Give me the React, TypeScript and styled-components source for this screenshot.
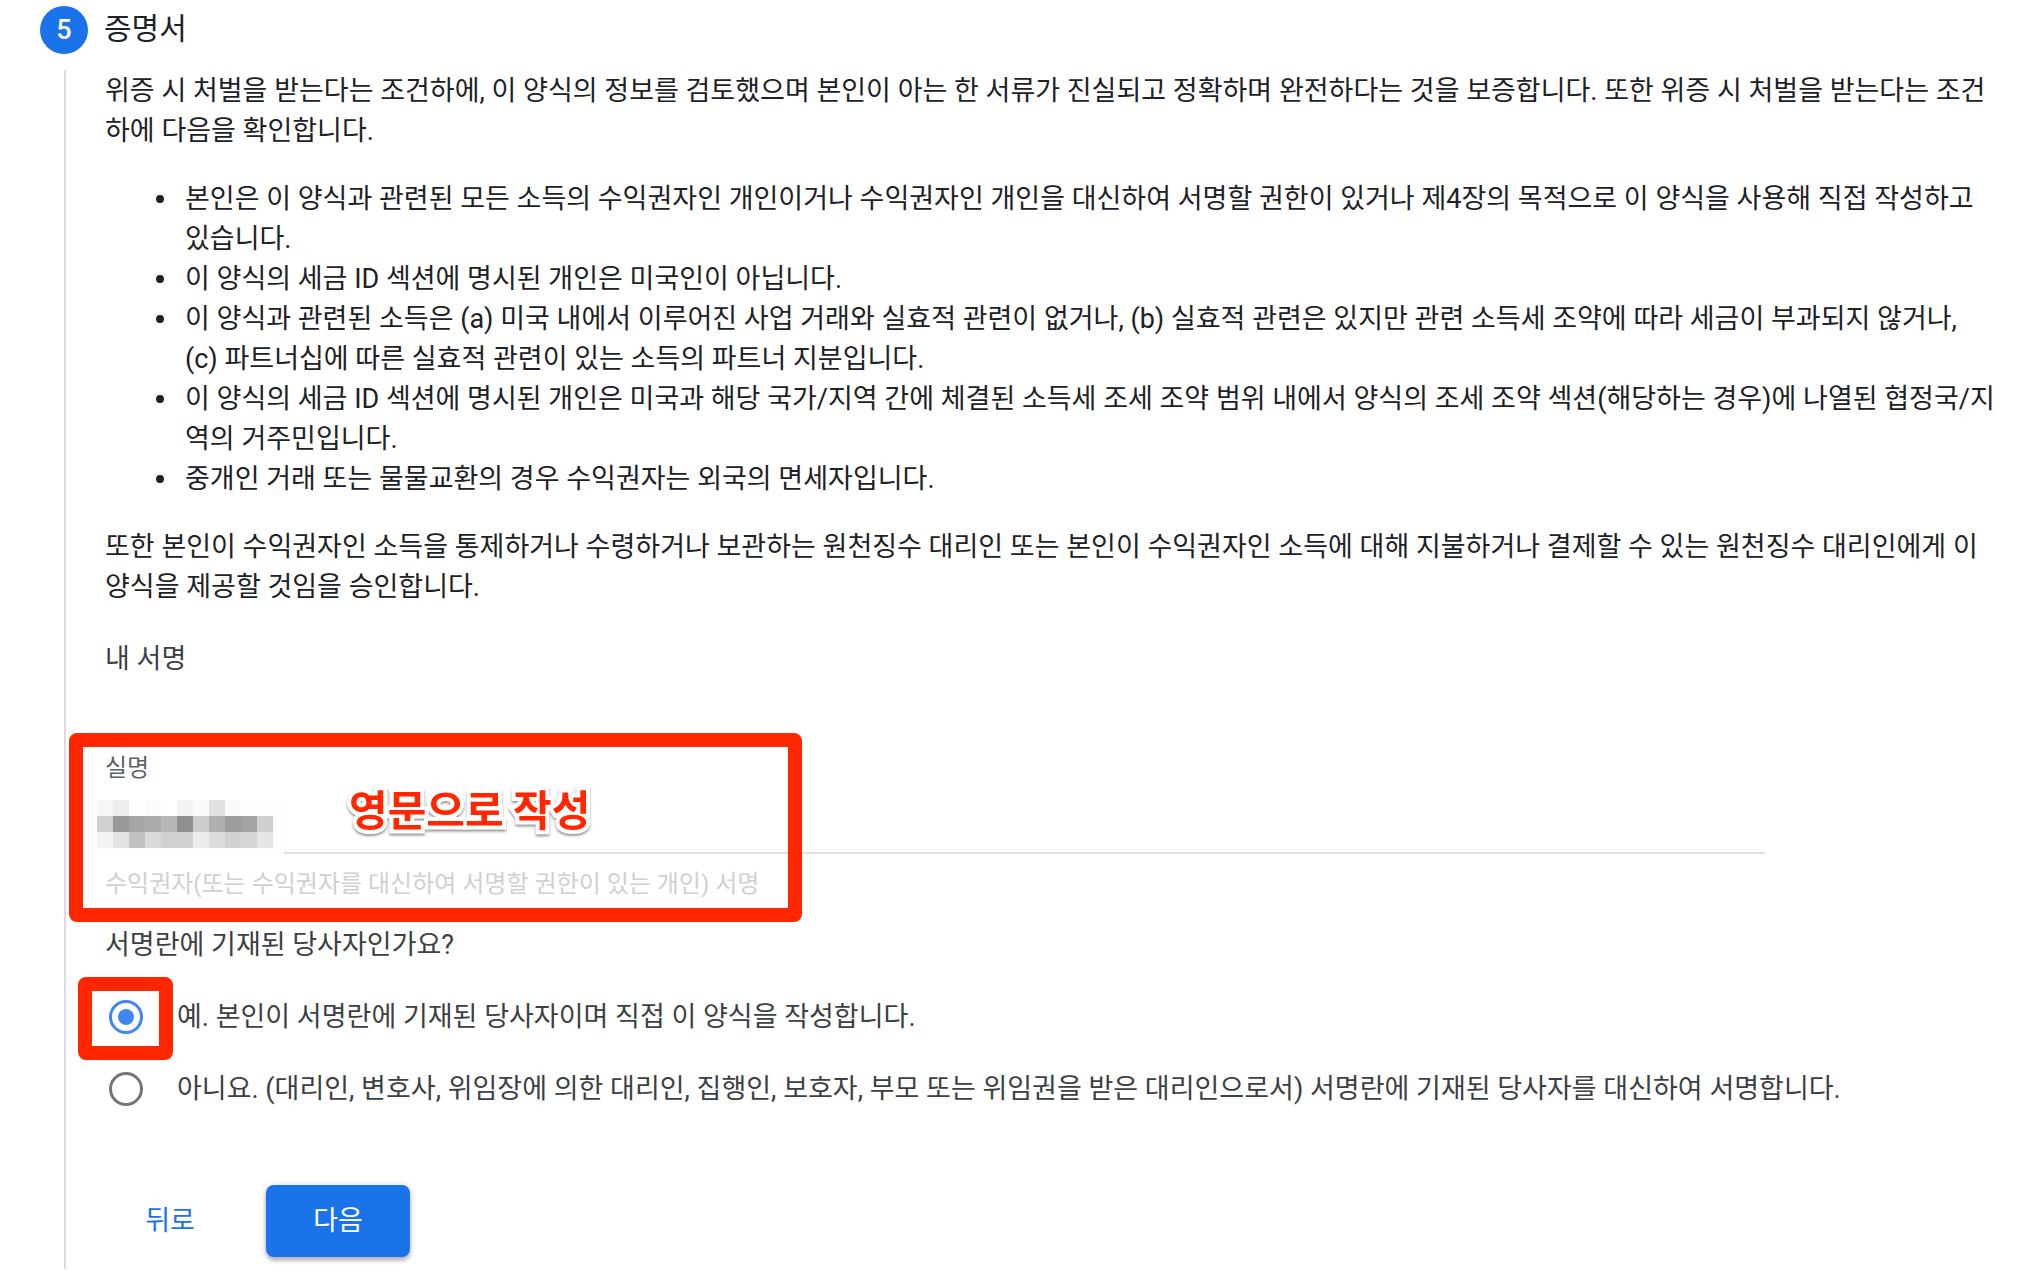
import React, { useState } from "react";
import styled, { createGlobalStyle } from "styled-components";

const GlobalStyle = createGlobalStyle`
  * { box-sizing: border-box; }
  body {
    margin: 0;
    background: #fff;
    color: #202124;
    font-family: Roboto, "Noto Sans CJK KR", sans-serif;
    font-size: 27px;
    line-height: 40px;
  }
`;

const RED = "#ff2600";

const Step = styled.section`
  padding: 6px 42px 12px 40px;
`;

const StepHeader = styled.header`
  display: flex;
  align-items: center;
  gap: 16px;
  height: 48px;
`;

const StepNumber = styled.span`
  display: flex;
  align-items: center;
  justify-content: center;
  width: 48px;
  height: 48px;
  border-radius: 50%;
  background: #1a73e8;
  color: #fff;
  font-weight: 500;
`;

const StepTitle = styled.h2`
  margin: 0;
  padding-bottom: 2px;
  font-size: 30px;
  font-weight: 400;
`;

const StepBody = styled.form`
  margin: 16px 0 0 24px;
  padding: 1px 0 0 39px;
  border-left: 2px solid #dadce0;
`;

const Paragraph = styled.p`
  margin: 0;
`;

const Terms = styled.ul`
  margin: 28px 0;
  padding-left: 80px;
  list-style: none;
`;

const Term = styled.li`
  &::before {
    content: "";
    display: inline-block;
    width: 8px;
    height: 8px;
    margin: 0 21px 0 -29px;
    border-radius: 50%;
    background: currentColor;
    vertical-align: 5px;
  }
`;

const GroupTitle = styled.h3`
  margin: 32px 0 0;
  color: #3c4043;
  font-size: 27px;
  font-weight: 400;
`;

const Field = styled.div`
  position: relative;
  display: flex;
  flex-direction: column;
  width: 87.5%;
  margin-top: 69px;
`;

const FieldLabel = styled.label`
  color: #5f6368;
  font-size: 24px;
  line-height: 40px;
`;

const FieldInput = styled.input`
  height: 66px;
  padding: 0;
  border: 0;
  border-bottom: 2px solid #e0e0e0;
  outline: 0;
  background: transparent;
  color: #202124;
  font: inherit;
`;

const FieldHint = styled.span`
  margin-top: 10px;
  color: #d0d0d0;
  font-size: 24px;
  line-height: 40px;
`;

const Mosaic = styled.div`
  position: absolute;
  top: 52px;
  left: -8px;
  display: grid;
  grid-template-columns: repeat(11, 16px);
  grid-auto-rows: 16px;
  padding: 0 11px 10px 0;
  background: #fefefe;
`;

const MosaicCell = styled.span<{ $level: number }>`
  background: ${(p) => `rgb(${p.$level}, ${p.$level}, ${p.$level})`};
`;

const FieldHighlight = styled.div`
  position: absolute;
  top: -15px;
  left: -36px;
  width: 733px;
  height: 189px;
  border: 14px solid ${RED};
  border-radius: 8px;
  pointer-events: none;
`;

const Callout = styled.strong`
  position: absolute;
  top: 30px;
  left: 244px;
  color: ${RED};
  font-family: "Noto Sans CJK KR", sans-serif;
  font-size: 42px;
  font-weight: 700;
  line-height: 60px;
  white-space: nowrap;
  -webkit-text-stroke: 8px #fff;
  paint-order: stroke fill;
  filter: drop-shadow(0 2px 1px rgba(0, 0, 0, 0.4));
`;

const Choices = styled.fieldset`
  margin: 21px 0 0;
  padding: 0;
  border: 0;
  color: #3c4043;
`;

const Question = styled.legend`
  padding: 0;
  margin-bottom: 32px;
`;

const Choice = styled.label`
  position: relative;
  display: flex;
  align-items: center;
  gap: 34px;
  width: fit-content;
  margin-bottom: 32px;
  padding-left: 4px;
`;

const Radio = styled.input`
  display: grid;
  place-items: center;
  flex: none;
  width: 34px;
  height: 34px;
  margin: 0;
  appearance: none;
  border: 3px solid #757575;
  border-radius: 50%;

  &:checked {
    border-color: #4285f4;
  }

  &:checked::before {
    content: "";
    width: 16px;
    height: 16px;
    border-radius: 50%;
    background: #4285f4;
  }
`;

const ChoiceHighlight = styled.span`
  position: absolute;
  top: -20px;
  left: -27px;
  width: 95px;
  height: 83px;
  border: 14px solid ${RED};
  border-radius: 8px;
  pointer-events: none;
`;

const Actions = styled.div`
  display: flex;
  gap: 32px;
  padding: 44px 0 12px 1px;
`;

const ActionButton = styled.button<{ $primary?: boolean }>`
  height: 72px;
  min-width: ${(p) => (p.$primary ? "144px" : "128px")};
  padding: 0 32px;
  border: 0;
  border-radius: 8px;
  background: ${(p) => (p.$primary ? "#1a73e8" : "transparent")};
  color: ${(p) => (p.$primary ? "#fff" : "#1a73e8")};
  box-shadow: ${(p) =>
    p.$primary
      ? "0 4px 4px rgba(0, 0, 0, 0.24), 0 0 6px rgba(0, 0, 0, 0.16)"
      : "none"};
  font: inherit;
  cursor: pointer;
`;

const TERMS = [
  "본인은 이 양식과 관련된 모든 소득의 수익권자인 개인이거나 수익권자인 개인을 대신하여 서명할 권한이 있거나 제4장의 목적으로 이 양식을 사용해 직접 작성하고 있습니다.",
  "이 양식의 세금 ID 섹션에 명시된 개인은 미국인이 아닙니다.",
  "이 양식과 관련된 소득은 (a) 미국 내에서 이루어진 사업 거래와 실효적 관련이 없거나, (b) 실효적 관련은 있지만 관련 소득세 조약에 따라 세금이 부과되지 않거나, (c)\u00a0파트너십에 따른 실효적 관련이 있는 소득의 파트너 지분입니다.",
  "이 양식의 세금 ID 섹션에 명시된 개인은 미국과 해당 국가/지역 간에 체결된 소득세 조세 조약 범위 내에서 양식의 조세 조약 섹션(해당하는 경우)에 나열된 협정국/지역의 거주민입니다.",
  "중개인 거래 또는 물물교환의 경우 수익권자는 외국의 면세자입니다.",
];

const CHOICES = [
  { id: "self", label: "예. 본인이 서명란에 기재된 당사자이며 직접 이 양식을 작성합니다." },
  {
    id: "agent",
    label:
      "아니요. (대리인, 변호사, 위임장에 의한 대리인, 집행인, 보호자, 부모 또는 위임권을 받은 대리인으로서) 서명란에 기재된 당사자를 대신하여 서명합니다.",
  },
];

const MOSAIC_LEVELS = [
  246, 237, 254, 252, 255, 243, 250, 225, 249, 253, 253,
  208, 153, 166, 171, 182, 143, 205, 176, 157, 163, 207,
  243, 226, 194, 218, 208, 208, 236, 220, 209, 213, 230,
];

export default function App() {
  const [signer, setSigner] = useState("self");

  return (
    <>
      <GlobalStyle />
      <Step>
        <StepHeader>
          <StepNumber>5</StepNumber>
          <StepTitle>증명서</StepTitle>
        </StepHeader>
        <StepBody onSubmit={(e) => e.preventDefault()}>
          <Paragraph>
            위증 시 처벌을 받는다는 조건하에, 이 양식의 정보를 검토했으며 본인이 아는 한 서류가 진실되고 정확하며 완전하다는 것을 보증합니다. 또한 위증 시 처벌을 받는다는 조건하에 다음을 확인합니다.
          </Paragraph>
          <Terms>
            {TERMS.map((term) => (
              <Term key={term}>{term}</Term>
            ))}
          </Terms>
          <Paragraph>
            또한 본인이 수익권자인 소득을 통제하거나 수령하거나 보관하는 원천징수 대리인 또는 본인이 수익권자인 소득에 대해 지불하거나 결제할 수 있는 원천징수 대리인에게 이 양식을 제공할 것임을 승인합니다.
          </Paragraph>
          <GroupTitle>내 서명</GroupTitle>
          <Field>
            <FieldLabel htmlFor="legal-name">실명</FieldLabel>
            <FieldInput id="legal-name" type="text" aria-describedby="legal-name-hint" />
            <FieldHint id="legal-name-hint">
              수익권자(또는 수익권자를 대신하여 서명할 권한이 있는 개인) 서명
            </FieldHint>
            <Mosaic aria-hidden="true">
              {MOSAIC_LEVELS.map((level, i) => (
                <MosaicCell key={i} $level={level} />
              ))}
            </Mosaic>
            <FieldHighlight />
            <Callout>영문으로 작성</Callout>
          </Field>
          <Choices>
            <Question>서명란에 기재된 당사자인가요?</Question>
            {CHOICES.map(({ id, label }) => (
              <Choice key={id}>
                <Radio
                  type="radio"
                  name="signer"
                  value={id}
                  checked={signer === id}
                  onChange={() => setSigner(id)}
                />
                {label}
                {signer === id && <ChoiceHighlight />}
              </Choice>
            ))}
          </Choices>
          <Actions>
            <ActionButton type="button">뒤로</ActionButton>
            <ActionButton type="submit" $primary>
              다음
            </ActionButton>
          </Actions>
        </StepBody>
      </Step>
    </>
  );
}
